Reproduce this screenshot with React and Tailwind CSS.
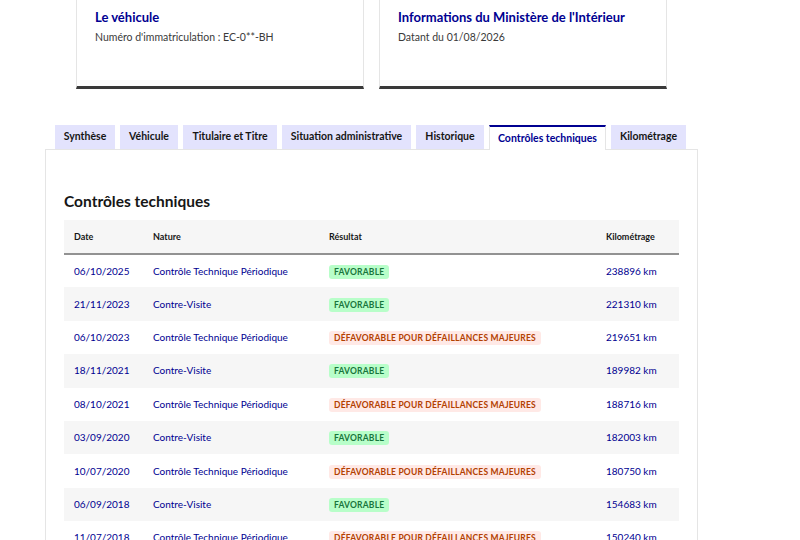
import React from "react";

const rows = [
    { date: "06/10/2025", nature: "Contrôle Technique Périodique", ok: true, km: "238896 km" },
    { date: "21/11/2023", nature: "Contre-Visite", ok: true, km: "221310 km" },
    { date: "06/10/2023", nature: "Contrôle Technique Périodique", ok: false, km: "219651 km" },
    { date: "18/11/2021", nature: "Contre-Visite", ok: true, km: "189982 km" },
    { date: "08/10/2021", nature: "Contrôle Technique Périodique", ok: false, km: "188716 km" },
    { date: "03/09/2020", nature: "Contre-Visite", ok: true, km: "182003 km" },
    { date: "10/07/2020", nature: "Contrôle Technique Périodique", ok: false, km: "180750 km" },
    { date: "06/09/2018", nature: "Contre-Visite", ok: true, km: "154683 km" },
    { date: "11/07/2018", nature: "Contrôle Technique Périodique", ok: false, km: "150240 km" },
];

const tabs = [
    { label: "Synthèse", w: "w-[60px]" },
    { label: "Véhicule", w: "w-[58px]" },
    { label: "Titulaire et Titre", w: "w-[94px]" },
    { label: "Situation administrative", w: "w-[129px]" },
    { label: "Historique", w: "w-[68px]" },
    { label: "Contrôles techniques", w: "w-[117px]", active: true },
    { label: "Kilométrage", w: "w-[75px]" },
];

export default function App() {
    return (
        <div className="w-[800px] h-[540px] overflow-hidden bg-white font-['Lato',sans-serif] text-[#161616]">
            {/* cartes du haut */}
            <div className="flex gap-[15px] pl-[76px]">
                <div className="w-[288px] h-[89px] border-x border-[#e5e5e5] border-b-[3px] border-b-[#3a3a3a] px-[18px] pt-[7px]">
                    <h3 className="text-[13px] font-bold text-[#000091] leading-[20px] whitespace-nowrap">Le véhicule</h3>
                    <p className="text-[10.5px] text-[#3a3a3a] mt-[3px] whitespace-nowrap">Numéro d'immatriculation : EC-0**-BH</p>
                </div>
                <div className="w-[288px] h-[89px] border-x border-[#e5e5e5] border-b-[3px] border-b-[#3a3a3a] px-[18px] pt-[7px]">
                    <h3 className="text-[13px] font-bold text-[#000091] leading-[20px] whitespace-nowrap">Informations du Ministère de l'Intérieur</h3>
                    <p className="text-[10.5px] text-[#3a3a3a] mt-[3px] whitespace-nowrap">Datant du 01/08/2026</p>
                </div>
            </div>

            {/* onglets */}
            <div className="mt-[36px] ml-[45px] w-[653px]">
                <div className="flex gap-[5px] pl-[10px] h-[24px]">
                    {tabs.map((t) => (
                        <div
                            key={t.label}
                            className={
                                t.active
                                    ? `${t.w} h-[25px] bg-white border-t-2 border-x border-t-[#000091] border-x-[#e5e5e5] flex items-center justify-center whitespace-nowrap text-[10.5px] font-bold text-[#000091] relative z-10`
                                    : `${t.w} h-[24px] bg-[#e3e3fd] flex items-center justify-center whitespace-nowrap text-[10.5px] font-bold text-[#161616]`
                            }
                        >
                            {t.label}
                        </div>
                    ))}
                </div>
                <div className="border border-[#e5e5e5] h-[400px] px-[18px]">
                    <h2 className="text-[15.5px] font-bold mt-[39px] leading-[24px]">Contrôles techniques</h2>
                    <table className="w-full mt-[7px] text-[10px] border-collapse">
                        <thead>
                            <tr className="bg-[#f6f6f6] h-[34px] border-b-2 border-[#929292] text-[9px]">
                                <th className="text-left font-bold pl-[10px] w-[89px]">Date</th>
                                <th className="text-left font-bold w-[176px]">Nature</th>
                                <th className="text-left font-bold">Résultat</th>
                                <th className="text-left font-bold w-[73px]">Kilométrage</th>
                            </tr>
                        </thead>
                        <tbody>
                            {rows.map((r, i) => (
                                <tr key={i} className={i % 2 === 1 ? "bg-[#f6f6f6] h-[33.4px]" : "h-[33.4px]"}>
                                    <td className="pl-[10px] text-[#000091]">{r.date}</td>
                                    <td className="text-[#000091]">{r.nature}</td>
                                    <td>
                                        {r.ok ? (
                                            <span className="inline-block rounded-[3px] bg-[#b8fec9] text-[#18753c] font-bold text-[8.5px] tracking-[0.2px] px-[5px] leading-[14px]">
                                                FAVORABLE
                                            </span>
                                        ) : (
                                            <span className="inline-block rounded-[3px] bg-[#ffe9e6] text-[#b34000] font-bold text-[8.5px] tracking-[0.2px] px-[5px] leading-[14px]">
                                                DÉFAVORABLE POUR DÉFAILLANCES MAJEURES
                                            </span>
                                        )}
                                    </td>
                                    <td className="text-[#000091]">{r.km}</td>
                                </tr>
                            ))}
                        </tbody>
                    </table>
                </div>
            </div>
        </div>
    );
}
